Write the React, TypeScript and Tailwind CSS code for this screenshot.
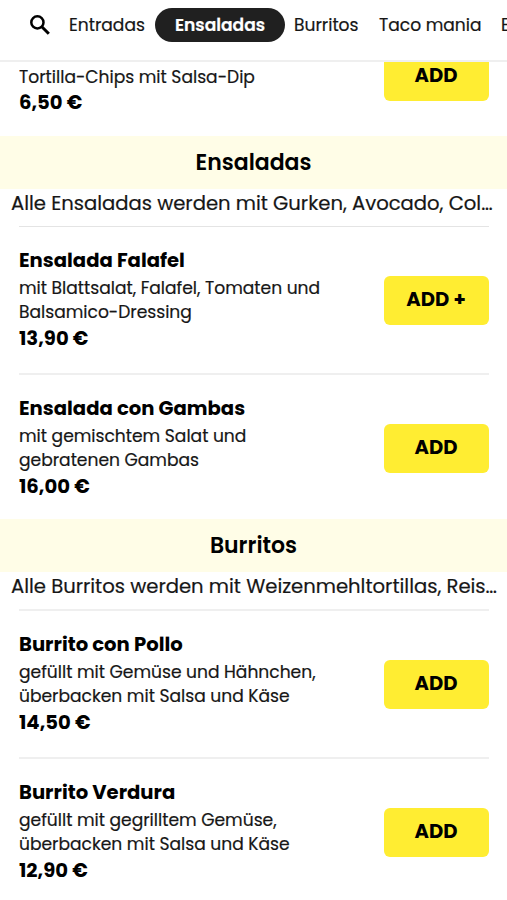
import { clsx } from 'clsx'

interface MenuItem {
  name: string
  lines: string[]
  price: string
  action: string
}

interface MenuSection {
  title: string
  intro: string
  ruleClass: string
  items: MenuItem[]
}

const sections: MenuSection[] = [
  {
    title: 'Ensaladas',
    intro: 'Alle Ensaladas werden mit Gurken, Avocado, Col…',
    ruleClass: 'h-px bg-[#e4e4e4]',
    items: [
      {
        name: 'Ensalada Falafel',
        lines: ['mit Blattsalat, Falafel, Tomaten und', 'Balsamico-Dressing'],
        price: '13,90 €',
        action: 'ADD +',
      },
      {
        name: 'Ensalada con Gambas',
        lines: ['mit gemischtem Salat und', 'gebratenen Gambas'],
        price: '16,00 €',
        action: 'ADD',
      },
    ],
  },
  {
    title: 'Burritos',
    intro: 'Alle Burritos werden mit Weizenmehltortillas, Reis…',
    ruleClass: 'h-0.5 bg-[#efefef]',
    items: [
      {
        name: 'Burrito con Pollo',
        lines: ['gefüllt mit Gemüse und Hähnchen,', 'überbacken mit Salsa und Käse'],
        price: '14,50 €',
        action: 'ADD',
      },
      {
        name: 'Burrito Verdura',
        lines: ['gefüllt mit gegrilltem Gemüse,', 'überbacken mit Salsa und Käse'],
        price: '12,90 €',
        action: 'ADD',
      },
    ],
  },
]

function SearchIcon() {
  return (
    <svg viewBox="0 0 20 20" className="mt-[7px] h-5 w-5 shrink-0" fill="none" stroke="black">
      <circle cx="7.4" cy="7.4" r="6.1" strokeWidth="2.5" />
      <path d="M11.8 11.8 L18.8 18.8" strokeWidth="3" />
    </svg>
  )
}

function AddButton({ label }: { label: string }) {
  return (
    <button className="h-[49px] w-[105px] shrink-0 rounded-md bg-[#ffed32] pb-px text-[19.6px] font-bold text-black">
      {label}
    </button>
  )
}

function Price({ value }: { value: string }) {
  return <p className="h-[26px] text-[19.6px] leading-[27px] font-bold text-black">{value}</p>
}

function CategoryNav() {
  return (
    <nav className="flex h-[62px] items-start border-b-2 border-[#efefef] pt-2 pl-[30px] text-[17.1px] leading-[35px] whitespace-nowrap">
      <SearchIcon />
      <a className="ml-[19px] w-[77px] shrink-0 [-webkit-text-stroke:0.2px]">Entradas</a>
      <a className="ml-[9px] h-[34px] w-[130px] shrink-0 rounded-full bg-[#202020] text-center font-semibold text-white [-webkit-text-stroke:0.2px]">
        Ensaladas
      </a>
      <a className="ml-[9px] w-[65px] shrink-0 [-webkit-text-stroke:0.2px]">Burritos</a>
      <a className="ml-[20px] w-[103px] shrink-0 [-webkit-text-stroke:0.2px]">Taco mania</a>
      <a className="ml-[19px] shrink-0 [-webkit-text-stroke:0.2px]">E</a>
    </nav>
  )
}

function MenuRow({ item, last }: { item: MenuItem; last: boolean }) {
  return (
    <div
      className={clsx(
        'mr-[18.5px] ml-[19px] flex justify-between pt-[18px]',
        last ? 'h-[144px]' : 'h-[148px] border-b-2 border-[#efefef]',
      )}
    >
      <div className="whitespace-nowrap">
        <h3 className="h-[31px] text-[19.6px] leading-[31px] font-bold text-black">{item.name}</h3>
        <div className="h-[49px] text-[17.1px] leading-[24.5px] [-webkit-text-stroke:0.2px]">
          {item.lines.map((line) => (
            <p key={line} className="h-[24px]">
              {line}
            </p>
          ))}
        </div>
        <Price value={item.price} />
      </div>
      <div className="mt-[31px]">
        <AddButton label={item.action} />
      </div>
    </div>
  )
}

export default function App() {
  return (
    <div className="h-[900px] w-[507px] overflow-hidden bg-white font-[Poppins,sans-serif] text-[#161616]">
      <CategoryNav />

      {/* tail of the Entradas section, scrolled under the nav */}
      <div className="mr-[18.5px] ml-[19px] flex h-[74px] items-end justify-between overflow-hidden pb-[35px]">
        <div className="-mb-[14px] whitespace-nowrap">
          <p className="h-[25px] text-[17.1px] leading-[26px] [-webkit-text-stroke:0.2px]">
            Tortilla-Chips mit Salsa-Dip
          </p>
          <Price value="6,50 €" />
        </div>
        <AddButton label="ADD" />
      </div>

      {sections.map((section) => (
        <section key={section.title}>
          <h2 className="h-[53px] bg-[#fffde7] text-center text-[22px] leading-[53px] font-semibold text-black">
            {section.title}
          </h2>
          <p className="h-[37px] pl-[11px] text-[19.6px] leading-[29px] tracking-[-0.01px] whitespace-nowrap [-webkit-text-stroke:0.2px]">
            {section.intro}
          </p>
          <div className={clsx('mr-[18.5px] ml-[19px]', section.ruleClass)} />
          {section.items.map((item, i) => (
            <MenuRow key={item.name} item={item} last={i === section.items.length - 1} />
          ))}
        </section>
      ))}
    </div>
  )
}
